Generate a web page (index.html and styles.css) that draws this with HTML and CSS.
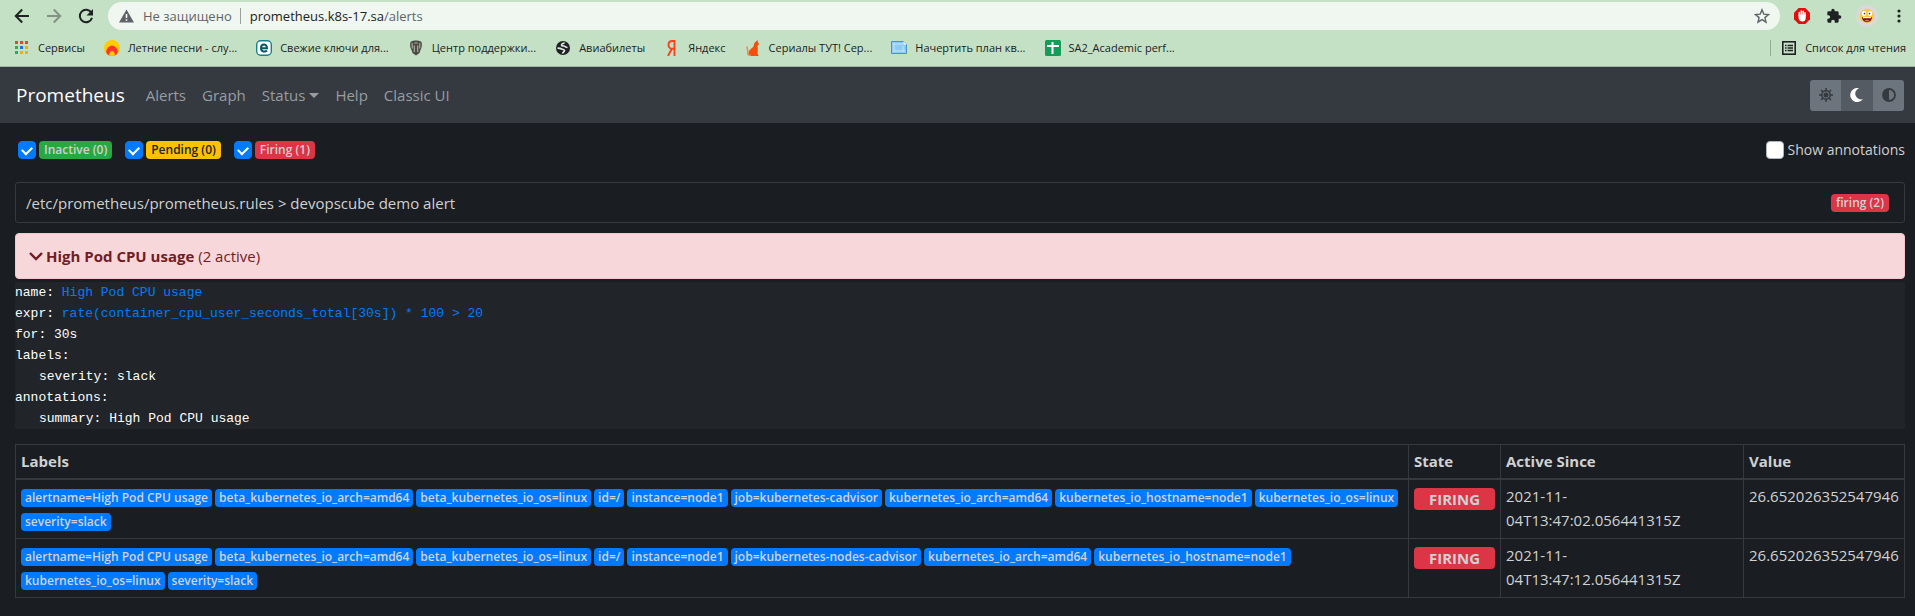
FILE: index.html
```html
<!DOCTYPE html>
<html lang="ru">
<head>
<meta charset="utf-8">
<title>Prometheus Alerts</title>
<link rel="stylesheet" href="styles.css">
</head>
<body>
<header class="browser">
  <div class="toolbar">
    <button class="tool back" aria-label="Назад"><svg width="16" height="16" viewBox="0 0 16 16" fill="none" stroke="#202124" stroke-width="2"><path d="M15 8H2M8.2 1.5 1.8 8l6.4 6.5"/></svg></button>
    <button class="tool forward" aria-label="Вперёд"><svg width="16" height="16" viewBox="0 0 16 16" fill="none" stroke="#839284" stroke-width="2"><path d="M1 8h13M7.800 1.500 14.200 8l-6.400 6.500"/></svg></button>
    <button class="tool reload" aria-label="Обновить"><svg width="16" height="16" viewBox="0 0 16 16"><path d="M13.300 4.700A6.200 6.200 0 1 0 14 9.700" fill="none" stroke="#202124" stroke-width="2"/><path d="M15 1v6.500H8.500z" fill="#202124"/></svg></button>
    <div class="address">
      <svg width="15" height="14" viewBox="0 0 15 14"><path d="M7.500.5 15 13.500H0z" fill="#5f6368"/><path d="M6.700 5h1.600v4H6.700zM6.700 10.200h1.600v1.600H6.700z" fill="#fff"/></svg>
      <span class="insecure">Не защищено</span>
      <span class="url"><span class="host">prometheus.k8s-17.sa</span>/alerts</span>
      <button class="tool star" aria-label="В закладки"><svg width="16" height="16" viewBox="0 0 16 16" fill="none" stroke="#5f6368" stroke-width="1.400"><path d="m8 1.800 1.800 4.300 4.700.4-3.600 3.100 1.100 4.600L8 11.700l-4 2.500 1.100-4.600L1.500 6.500l4.700-.4z"/></svg></button>
    </div>
    <button class="tool" aria-label="AdBlock"><svg width="16" height="16" viewBox="0 0 16 16"><path d="M4.700 0h6.600L16 4.700v6.600L11.300 16H4.700L0 11.300V4.700z" fill="#e40d0d"/><path d="M5.300 7.500V4.400M7.300 7V2.900M9.200 7V3.300M11 7.500V4.700" stroke="#fff" stroke-width="1.500" stroke-linecap="round"/><path d="M4.600 6.500h7.100v3.700c0 2-1.300 3.300-3.200 3.300-2.300 0-3.900-1.700-3.900-3.600z" fill="#fff"/></svg></button>
    <button class="tool" aria-label="Расширения"><svg width="16" height="16" viewBox="0 0 24 24" fill="#202124"><path d="M20.500 11H19V7a2 2 0 0 0-2-2h-4V3.500a2.500 2.500 0 0 0-5 0V5H4a2 2 0 0 0-2 2v3.800h1.500a2.700 2.700 0 0 1 0 5.400H2V20a2 2 0 0 0 2 2h3.800v-1.500a2.700 2.700 0 0 1 5.400 0V22H17a2 2 0 0 0 2-2v-4h1.500a2.500 2.500 0 0 0 0-5z"/></svg></button>
    <button class="tool profile" aria-label="Профиль"><svg width="22" height="22" viewBox="0 0 22 22"><circle cx="11" cy="11" r="11" fill="#d9d9dc"/><circle cx="11" cy="11" r="7.200" fill="#f8c84b"/><ellipse cx="8" cy="8.500" rx="2.200" ry="2.500" fill="#fff"/><ellipse cx="14" cy="8.500" rx="2.200" ry="2.500" fill="#fff"/><circle cx="8.500" cy="8.600" r=".8" fill="#333"/><circle cx="13.500" cy="8.600" r=".8" fill="#333"/><path d="M6 12h10c0 3-2 5.200-5 5.200S6 15 6 12z" fill="#7b1518"/><path d="M6.800 12h8.400v1.200H6.800z" fill="#fff"/><path d="M8.500 15.500c1.500-1 3.500-1 5 0-1.200 1.200-3.800 1.200-5 0z" fill="#ee6b62"/></svg></button>
    <button class="tool" aria-label="Меню"><svg width="16" height="16" viewBox="0 0 16 16" fill="#202124"><circle cx="8" cy="3" r="1.600"/><circle cx="8" cy="8" r="1.600"/><circle cx="8" cy="13" r="1.600"/></svg></button>
  </div>
  <nav class="bookmarks" aria-label="Закладки">
    <a href="#"><svg width="16" height="16" viewBox="0 0 16 16"><path d="M1 1h3v3H1zM6 1h3v3H6zM11 1h3v3h-3z" fill="#ea4335"/><path d="M1 6h3v3H1zM1 11h3v3H1z" fill="#34a853"/><path d="M6 6h3v3H6z" fill="#1a73e8"/><path d="M11 6h3v3h-3zM6 11h3v3H6zM11 11h3v3h-3z" fill="#fbab05"/></svg>Сервисы</a>
    <a href="#"><svg width="16" height="16" viewBox="0 0 16 16"><circle cx="8" cy="8" r="8" fill="#ffcc00"/><path d="M3.500 14.500A5.500 5.500 0 1 1 12.500 14.500 8 8 0 0 1 3.500 14.500z" fill="#ff3333"/><path d="M5.300 15.500a2.800 3.500 0 1 1 5.400 0 8 8 0 0 1-5.400 0z" fill="#ffcc00"/></svg>Летние песни - слу...</a>
    <a href="#"><svg width="16" height="16" viewBox="0 0 16 16"><rect x=".7" y=".7" width="14.600" height="14.600" rx="4" fill="#fff" stroke="#17808a" stroke-width="1.400"/><path d="M5 8.200h6C11 3.300 5 3.500 5 8.200c0 4 4.500 4 6 2.300" fill="none" stroke="#075965" stroke-width="2"/></svg>Свежие ключи для...</a>
    <a href="#"><svg width="16" height="16" viewBox="0 0 16 16"><path d="M8 .5c1.500 0 4 .3 5.500 1.500.8 3 .3 6-1 8l-1 3L8 15.500 4.500 13l-1-3c-1.300-2-1.800-5-1-8C4 .8 6.500.5 8 .5z" fill="#4b4b43"/><path d="M4.200 3v5.500M6.300 5.500V12M9.700 5.500V12M11.800 3v5.500M6.300 3h3.400" stroke="#b0b5a5" stroke-width="1.100" fill="none"/></svg>Центр поддержки...</a>
    <a href="#"><svg width="16" height="16" viewBox="0 0 16 16"><circle cx="8" cy="8" r="7" fill="#202124"/><path d="M9.500 2.500c-.5 1.200-3 1-3 2.500 0 1 1.500 1 2.500 1s1.500 1.500 3.500 1.500M2.500 8.200c2 0 3 0 4.200.8 1.300.8 2.800.3 2.800 1.600 0 1.200-1.500 1.400-2 3" fill="none" stroke="#dcebdc" stroke-width="1.700"/></svg>Авиабилеты</a>
    <a href="#"><svg width="16" height="16" viewBox="0 0 16 16"><path d="M10.500 0v16M10.500 1H8.200C3.300 1 3.300 8.700 8 8.700h2.500M7.800 8.700 4 16" fill="none" stroke="#fc3f1d" stroke-width="1.900"/></svg>Яндекс</a>
    <a href="#"><svg width="16" height="16" viewBox="0 0 16 16"><path d="M9 3.500 10.500 2 12.500 0l.5 2.300 1 1.700-1.500 2c1 3-.3 6 .3 8.500l1 1.500H4c-1-2.500-.5-5.500 2-7.200C8 7.500 9.300 6 9 3.500z" fill="#f4500b"/><path d="M6 15.300C1 15.500 3.500 12 2.700 10.500S3 8 1.500 6.500" fill="none" stroke="#ef8751" stroke-width="1.500"/></svg>Сериалы ТУТ! Сер...</a>
    <a href="#"><svg width="16" height="16" viewBox="0 0 16 16"><path d="M.5 1.500h12l3 3v9H.5z" fill="#8ecaf5" stroke="#4c91d0"/><path d="M2 4h10M2 11h12M3 3v9M12 6v6" stroke="#c2e5ff"/><path d="M12.500 1.500v3h3" fill="#fff"/></svg>Начертить план кв...</a>
    <a href="#"><svg width="16" height="16" viewBox="0 0 16 16"><rect width="16" height="16" rx="1.500" fill="#129e59"/><path d="M7.500 2v12M2 6h12" stroke="#fff" stroke-width="2"/></svg>SA2_Academic perf...</a>
    <a href="#" class="reading"><svg width="14" height="14" viewBox="0 0 14 14"><rect x=".8" y=".8" width="12.400" height="12.400" fill="none" stroke="#202124" stroke-width="1.600"/><path d="M3 4.500h1.500M5.500 4.500H11M3 7h1.500M5.500 7H11M3 9.500h1.500M5.500 9.500H11" stroke="#202124" stroke-width="1.300"/></svg>Список для чтения</a>
  </nav>
</header>
<nav class="navbar">
  <a class="brand" href="#">Prometheus</a>
  <a href="#">Alerts</a>
  <a href="#">Graph</a>
  <a href="#" class="dropdown">Status</a>
  <a href="#">Help</a>
  <a href="#">Classic UI</a>
  <div class="themes">
    <button aria-label="Light theme"><svg width="14" height="14" viewBox="0 0 14 14"><g stroke="#343a40" stroke-width="1.500" fill="none"><circle cx="7" cy="7" r="4.200"/><path d="M7 0v3M7 11v3M0 7h3M11 7h3M2 2l2 2M10 10l2 2M12 2l-2 2M4 10l-2 2"/></g><circle cx="7" cy="7" r="2.500" fill="#343a40"/></svg></button>
    <button class="active" aria-label="Dark theme"><svg width="14" height="14" viewBox="0 0 14 14"><path d="M9 .2A7 7 0 1 0 13 11 5.700 5.700 0 0 1 9 .2z" fill="#fff"/></svg></button>
    <button aria-label="Browser theme"><svg width="14" height="14" viewBox="0 0 14 14"><circle cx="7" cy="7" r="6" fill="none" stroke="#343a40" stroke-width="1.800"/><path d="M7 1a6 6 0 0 0 0 12z" fill="#343a40"/></svg></button>
  </div>
</nav>
<main class="content">
  <div class="filters">
    <label><input type="checkbox" checked><span class="badge green">Inactive (0)</span></label>
    <label><input type="checkbox" checked><span class="badge yellow">Pending (0)</span></label>
    <label><input type="checkbox" checked><span class="badge red">Firing (1)</span></label>
    <label class="annotations"><input type="checkbox">Show annotations</label>
  </div>
  <div class="group"><span>/etc/prometheus/prometheus.rules &gt; devopscube demo alert</span><span class="badge red">firing (2)</span></div>
  <div class="alert"><svg width="14" height="14" viewBox="0 0 14 14" fill="none" stroke="#721c24" stroke-width="2.400"><path d="m1 4 6 6 6-6"/></svg><span><strong>High Pod CPU usage</strong> (2 active)</span></div>
  <div class="rule">
    <div>name: <a href="#">High Pod CPU usage</a></div>
    <div>expr: <a href="#">rate(container_cpu_user_seconds_total[30s]) * 100 &gt; 20</a></div>
    <div>for: 30s</div>
    <div>labels:</div>
    <div class="nested">severity: slack</div>
    <div>annotations:</div>
    <div class="nested">summary: High Pod CPU usage</div>
  </div>
  <table class="alerts">
    <colgroup><col><col class="col-state"><col class="col-since"><col class="col-value"></colgroup>
    <thead><tr><th>Labels</th><th>State</th><th>Active Since</th><th>Value</th></tr></thead>
    <tbody>
      <tr>
        <td><div class="labels"><span class="badge blue">alertname=High Pod CPU usage</span><span class="badge blue">beta_kubernetes_io_arch=amd64</span><span class="badge blue">beta_kubernetes_io_os=linux</span><span class="badge blue">id=/</span><span class="badge blue">instance=node1</span><span class="badge blue">job=kubernetes-cadvisor</span><span class="badge blue">kubernetes_io_arch=amd64</span><span class="badge blue">kubernetes_io_hostname=node1</span><span class="badge blue">kubernetes_io_os=linux</span><span class="badge blue">severity=slack</span></div></td>
        <td><span class="state">FIRING</span></td>
        <td>2021-11-<wbr>04T13:47:02.056441315Z</td>
        <td>26.652026352547946</td>
      </tr>
      <tr>
        <td><div class="labels"><span class="badge blue">alertname=High Pod CPU usage</span><span class="badge blue">beta_kubernetes_io_arch=amd64</span><span class="badge blue">beta_kubernetes_io_os=linux</span><span class="badge blue">id=/</span><span class="badge blue">instance=node1</span><span class="badge blue">job=kubernetes-nodes-cadvisor</span><span class="badge blue">kubernetes_io_arch=amd64</span><span class="badge blue">kubernetes_io_hostname=node1</span><span class="badge blue">kubernetes_io_os=linux</span><span class="badge blue">severity=slack</span></div></td>
        <td><span class="state">FIRING</span></td>
        <td>2021-11-<wbr>04T13:47:12.056441315Z</td>
        <td>26.652026352547946</td>
      </tr>
    </tbody>
  </table>
</main>
</body>
</html>
```
FILE: styles.css
```css
* { box-sizing: border-box; }
body { margin: 0; background: #1a1d21; color: #d0d1d3; font: 15px/24px "Open Sans", "Noto Sans", sans-serif; }
a { color: inherit; text-decoration: none; }
svg { display: block; flex: none; }
button { border: 0; padding: 0; background: none; }

.browser { background: #c5e1c5; color: #202124; border-bottom: 1px solid #a0b8a0; font-size: 11px; }
.toolbar { display: flex; align-items: center; padding: 2px 8px 0 14px; }
.tool { flex: none; }
.forward { margin-left: 16px; }
.reload { margin-left: 16px; }
.address { flex: 1; display: flex; align-items: center; height: 28px; margin: 0 14px; padding: 0 10px 0 11px; border-radius: 14px; background: #f0f7f0; color: #5f6368; font-size: 13px; line-height: 16px; }
.insecure { margin-left: 9px; padding-right: 8px; border-right: 1px solid #9aa09c; }
.url { margin-left: 9px; }
.host { color: #202124; }
.star { margin-left: auto; }
.address ~ .tool + .tool { margin-left: 16px; }
.address ~ .tool.profile { margin-left: 14px; }
.address ~ .profile + .tool { margin-left: 13px; }

.bookmarks { display: flex; align-items: center; height: 36px; padding: 0 9px 0 14px; white-space: nowrap; }
.bookmarks a { display: flex; align-items: center; gap: 8px; margin-right: 19px; line-height: 24px; }
.bookmarks .reading { margin: 0 0 0 auto; padding-left: 11px; gap: 9px; border-left: 1px solid #93ab93; line-height: 16px; }

.navbar { display: flex; align-items: center; height: 56px; padding: 0 11px 0 16px; background: #343a40; color: #9a9da0; gap: 16px; }
.brand { color: #fff; font-size: 19px; margin-right: 5px; }
.dropdown { display: flex; align-items: center; gap: 4px; }
.dropdown::after { content: ""; border: 5px solid transparent; border-top-color: currentColor; border-bottom: 0; }
.themes { display: flex; margin-left: auto; border-radius: 3px; overflow: hidden; }
.themes button { display: grid; place-items: center; width: 31px; height: 31px; background: #6c757d; }
.themes .active { width: 32px; background: #545b62; }

.content { padding: 15px 10px 12px 15px; }
.filters { display: flex; align-items: center; height: 24px; padding-left: 3px; margin: 0 0 20px; gap: 13px; }
.filters label { display: flex; align-items: center; gap: 3px; }
.filters input { appearance: none; width: 18px; height: 18px; margin: 0; border: 1px solid #adb5bd; border-radius: 4px; background: #fff; }
.filters input:checked { border-color: #007bff; background: #007bff; display: grid; place-items: center; }
.filters input:checked::before { content: ""; width: 8px; height: 5px; margin-bottom: 2px; border: solid #fff; border-width: 0 0 2px 2px; transform: rotate(-45deg); }
.filters .annotations { margin-left: auto; font-size: 14px; }

.badge { display: inline-block; padding: 3px 5px; border-radius: 4px; font-size: 12px; line-height: 12px; font-weight: 600; white-space: nowrap; }
.green { background: #28a745; }
.yellow { background: #ffc107; color: #212529; }
.red { background: #dc3545; }
.blue { background: #007bff; padding: 3px 4px; }

.group { display: flex; align-items: center; justify-content: space-between; height: 41px; padding: 0 15px 0 10px; border: 1px solid #343a40; border-radius: 3px; }
.alert { display: flex; align-items: center; gap: 3px; height: 46px; margin-top: 10px; padding: 0 13px 1px; border: 1px solid #f5c6cb; border-radius: 4px; background: #f8d7da; color: #721c24; }
.rule { margin-top: 3px; background: #212529; color: #fff; font: 13px/21px "Liberation Mono", monospace; }
.rule a { color: #007bff; }
.nested { padding-left: 24px; }

.alerts { width: 100%; margin-top: 15px; border-collapse: collapse; table-layout: fixed; }
.alerts th, .alerts td { padding: 4px 5px 6px; border: 1px solid #343a40; text-align: left; vertical-align: top; }
.alerts th { padding-bottom: 5px; border-bottom-width: 2px; }
.col-state { width: 92px; }
.col-since { width: 243px; }
.col-value { width: 161px; }
.labels { display: flex; flex-wrap: wrap; gap: 6px 3px; padding: 5px 0 1px; }
.state { display: block; margin-top: 4px; border-radius: 4px; background: #dc3545; text-align: center; font-weight: 700; line-height: 22px; }
```
